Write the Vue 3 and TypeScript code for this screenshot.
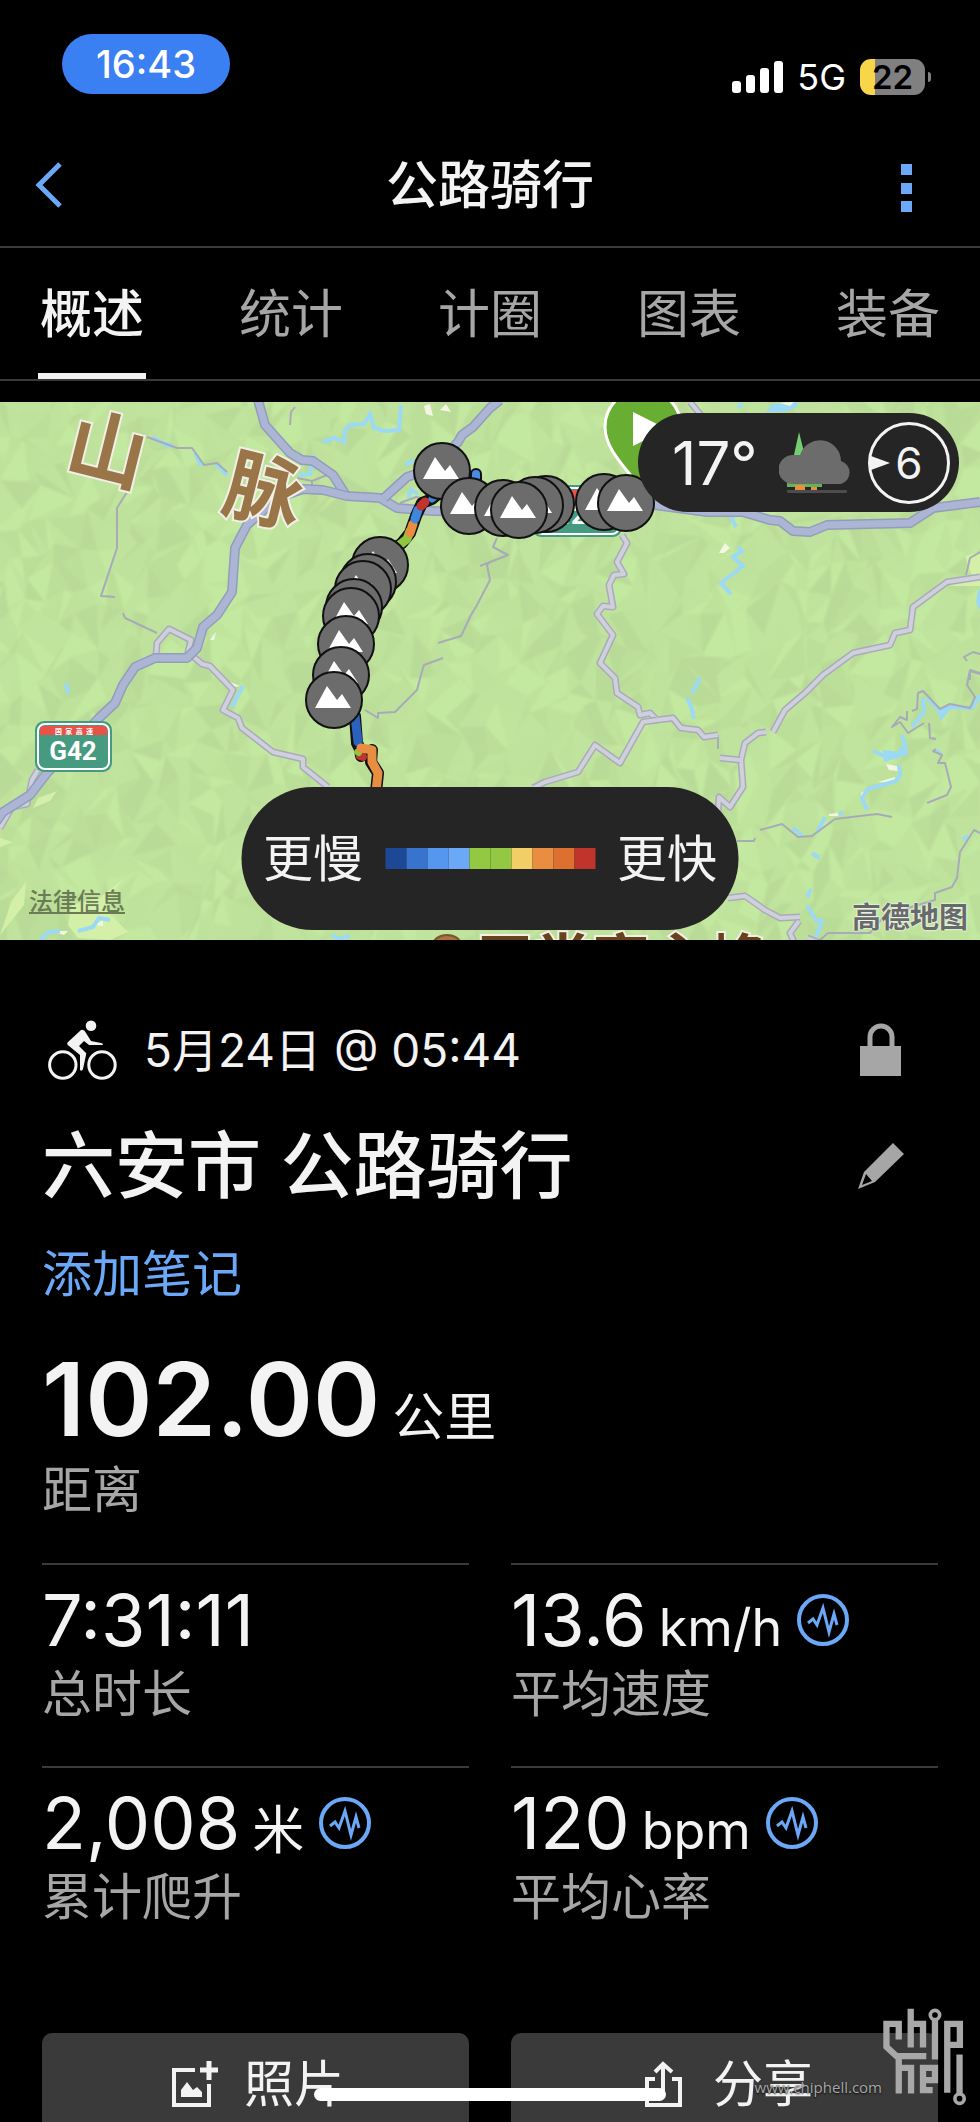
<script setup lang="ts">
interface Stat {
  value: string
  unit?: string
  label: string
  chart: boolean
}

interface Line {
  kind: 'main' | 'minor' | 'thin'
  points: string
}

const tabs: string[] = ['概述', '统计', '计圈', '图表', '装备']
const activeTab = '概述'

const stats: Stat[] = [
  { value: '7:31:11', label: '总时长', chart: false },
  { value: '13.6', unit: 'km/h', label: '平均速度', chart: true },
  { value: '2,008', unit: '米', label: '累计爬升', chart: true },
  { value: '120', unit: 'bpm', label: '平均心率', chart: true },
]

const speedColors: string[] = [
  '#1c4896', '#3874ce', '#5596ee', '#6ba8f7', '#93c843',
  '#93c843', '#f2ce66', '#e98e41', '#dc702f', '#c1342c',
]

const roads: Line[] = [
  { kind: 'thin', points: '147,437 177,448 192,448 204,465 217,463 227,472' },
  { kind: 'thin', points: '144,435 132,438 127,465 127,492 117,508 117,548 101,596 115,597' },
  { kind: 'thin', points: '123,613 125,618 157,633' },
  { kind: 'thin', points: '490,562 487,565 490,580 477,605 471,615 461,636 438,643' },
  { kind: 'thin', points: '443,658 424,665 421,675 417,690 395,712 378,713 378,718 365,710' },
  { kind: 'thin', points: '295,407 291,412 290,425' },
  { kind: 'thin', points: '497,538 493,547 508,555 480,566' },
  { kind: 'thin', points: '297,478 312,481 327,475 M312,481 312,490' },
  { kind: 'thin', points: '400,503 416,497 422,498' },
  { kind: 'thin', points: '718,735 718,749' },
  { kind: 'thin', points: '737,841 754,841 755,838' },
  { kind: 'thin', points: '760,830 782,824 798,837 812,836 835,819 877,814 892,817' },
  { kind: 'thin', points: '907,711 907,720 900,717 892,727 900,722 908,733 924,723' },
  { kind: 'thin', points: '912,711 917,709 918,693 923,691 940,709 950,704 970,708 975,697 967,685 970,670 980,673' },
  { kind: 'thin', points: '929,723 930,738 936,739' },
  { kind: 'thin', points: '936,749 933,751 942,755 938,763 945,763 951,787 947,795 927,803' },
  { kind: 'thin', points: '980,833 974,830 960,852 957,878 952,887 935,893 935,900 918,905 885,915 870,933 828,933 820,940' },
  { kind: 'thin', points: '980,552 970,558 966,575' },
  { kind: 'thin', points: '980,654 973,652 964,657 967,661' },
  { kind: 'thin', points: '970,680 970,671 980,674' },
  { kind: 'minor', points: '690,402 700,414 708,425' },
  { kind: 'minor', points: '156,656 157,643 169,629 191,640 188,652 202,664 210,666 233,690 223,710 238,718 242,728 273,752 303,759 303,767 328,787' },
  { kind: 'minor', points: '622,535 627,543 617,562 624,574 614,575 609,585 613,607 603,606 597,614 613,635 600,663 615,678 617,693 638,707 640,715 650,713 657,720 673,718 681,728 698,730 704,737 718,735' },
  { kind: 'minor', points: '657,720 643,722 620,763 595,745 578,772 545,782 533,788' },
  { kind: 'minor', points: '980,577 947,582 913,607 910,630 895,633 890,645 853,653 823,675 805,693 785,710 773,732' },
  { kind: 'minor', points: '766,732 758,733 745,743 741,760 743,787 730,807 719,797 718,813' },
  { kind: 'minor', points: '720,758 740,760' },
  { kind: 'minor', points: '728,898 745,896 765,910 780,918 800,917' },
  { kind: 'minor', points: '799,921 790,933 794,942 M807,938 820,943' },
  { kind: 'minor', points: '0,828 12,807 27,804 32,780 38,770' },
  { kind: 'main', points: '258,400 265,425 290,453 302,460 313,461 333,475 347,497' },
  { kind: 'main', points: '-4,822 3,812 30,795 47,773 100,717 115,703 123,685 135,667 155,658 187,658 197,648 203,627 217,615 232,592 235,548 247,525 277,498 303,489 323,490 347,496 380,498 397,508 433,511 500,512 655,505 707,512 743,512 770,520 780,521 793,531 810,532 827,525 910,523 933,508 980,502' },
  { kind: 'main', points: '384,498 407,477 433,468 458,442 462,435 473,427 490,408 500,400' },
]

const streams: string[] = [
  'M323 442 L334 438 L344 442 L345 430 L350 425 L364 424 L370 414 L374 428 L384 431 L399 430 L401 405',
  'M152 437 L165 444 L173 446 M195 453 L201 466 M216 464 L227 475',
  'M299 475 L310 474 L314 455 M405 465 L414 460 M408 498 L411 490 L418 494',
  'M731 517 L736 527 M738 547 L742 551 L733 557 L743 566 L721 583 L731 594',
  'M700 678 L692 693 M687 698 L691 706 L694 719',
  'M243 686 L232 707 M66 683 L68 694',
  'M923 698 L924 712 L912 727 M927 698 L940 710 L952 707 L972 708 L980 695',
  'M902 735 L905 745 L899 753 L887 757 L873 751',
  'M899 765 L900 775 L896 781 L868 789 L862 798 L867 810',
  'M825 817 L817 832 M793 828 L802 835 M812 853 L819 858 M840 815 L842 811',
  'M811 889 L807 897 M807 906 L816 920 L822 921 L816 937',
  'M40 940 L49 932 L60 931 M78 931 L93 927 L99 918 L110 920',
  'M332 935 L338 939 L350 936 M963 840 L968 836 M738 408 L742 403 M936 750 L941 754',
]

const markers: [number, number][] = [
  [380, 565], [368, 582], [363, 589], [354, 607], [351, 616], [346, 644], [341, 675], [334, 700],
  [442, 471], [469, 506], [503, 508], [546, 504], [535, 505], [519, 510], [604, 502], [626, 503],
]

const shades: string[] = ['#b9db97', '#bde19a', '#c0e49c', '#c4e9a0', '#b6d795', '#bfe29c']

/* Faceted relief: a jittered grid cut into triangles, grouped by shade. */
function buildRelief(): string[] {
  const cols = 62
  const rows = 26
  let seed = 7
  const rand = (): number => {
    seed = (seed * 16807) % 2147483647
    return seed / 2147483647
  }
  const pts: [number, number][][] = []
  for (let r = 0; r <= rows; r++) {
    const row: [number, number][] = []
    for (let c = 0; c <= cols; c++) {
      row.push([
        Math.round(c * 17 - 30 + (rand() - 0.5) * 22 + (r % 2) * 9),
        Math.round(r * 24 + 380 + (rand() - 0.5) * 32),
      ])
    }
    pts.push(row)
  }
  const out: string[] = shades.map(() => '')
  const tri = (a: [number, number], b: [number, number], c: [number, number]): void => {
    const i = Math.floor(rand() * shades.length)
    out[i] += `M${a}L${b}L${c}Z`
  }
  for (let r = 0; r < rows; r++) {
    for (let c = 0; c < cols; c++) {
      const [a, b, d, e] = [pts[r][c], pts[r][c + 1], pts[r + 1][c], pts[r + 1][c + 1]]
      if (rand() > 0.25) {
        tri(a, b, d)
        tri(b, d, e)
      } else {
        tri(a, b, e)
        tri(a, d, e)
      }
    }
  }
  return out
}

const relief = buildRelief()
</script>

<template>
  <div class="screen">
    <div class="status">
      <span class="clock">16:43</span>
      <div class="status-right">
        <svg class="signal" viewBox="0 0 51 32" aria-hidden="true">
          <rect x="0" y="20" width="9" height="12" rx="3" />
          <rect x="14" y="14" width="9" height="18" rx="3" />
          <rect x="28" y="7" width="9" height="25" rx="3" />
          <rect x="42" y="0" width="9" height="32" rx="3" />
        </svg>
        <span class="network">5G</span>
        <span class="battery"><span class="battery-body">22</span><span class="battery-nub"></span></span>
      </div>
    </div>

    <header class="header">
      <button class="icon-btn" type="button" aria-label="返回">
        <svg width="28" height="48" viewBox="0 0 28 48"><path d="M26 3 L5 24 L26 45" fill="none" stroke="#6ba8f7" stroke-width="5" /></svg>
      </button>
      <h1>公路骑行</h1>
      <button class="icon-btn more" type="button" aria-label="更多">
        <svg width="12" height="48" viewBox="0 0 12 48" fill="#6ba8f7"><path d="M0 0h11v11H0zM0 19h11v11H0zM0 37h11v11H0z" /></svg>
      </button>
    </header>

    <nav class="tabs" role="tablist">
      <button
        v-for="tab in tabs"
        :key="tab"
        class="tab"
        :class="{ active: tab === activeTab }"
        type="button"
        role="tab"
        :aria-selected="tab === activeTab"
      >{{ tab }}</button>
    </nav>

    <section class="map">
      <svg class="map-art" viewBox="0 402 980 538" preserveAspectRatio="xMidYMid slice">
        <defs>
          <g id="climb">
            <circle r="28" fill="#6c6c6c" stroke="#111" stroke-width="2" />
            <path d="M-19 8 L-7 -14 L3 0 L8 -6 L17 8Z" fill="#fff" />
          </g>
          <filter id="soft"><feGaussianBlur stdDeviation="1" /></filter>
        </defs>
        <rect x="0" y="402" width="980" height="538" fill="#c0e49d" />
        <g filter="url(#soft)">
          <path v-for="(d, i) in relief" :key="i" :d="d" :fill="shades[i]" opacity="0.7" />
        </g>
        <g fill="#d3efa8">
          <path d="M38 798 L57 791 L50 801 L33 808Z M0 838 L13 842 L0 847Z M72 905 L100 897 L122 880 L104 908 L128 932 L110 940 L78 938 L68 925Z M0 935 L12 900 L26 882 L24 905 L8 925Z" />
          <path d="M965 556 L980 552 L980 586 L950 586 L958 578 L972 576Z" />
        </g>
        <g fill="#f4f6e4">
          <path d="M719 553 L725 543 L730 548 L724 553Z M424 406 L430 404 L433 416 L426 414Z M440 410 L446 404 L451 412Z M230 682 L240 686 L228 688Z M210 640 L216 632 L214 640Z" />
          <path d="M886 764 L897 766 L898 771 L889 770Z M878 782 L895 777 L894 783Z M861 793 L865 791 L864 798 L861 800Z M829 814 L838 813 L838 816 L829 816Z M52 931 L68 931 L64 935Z M95 925 L103 920 L103 926Z" />
        </g>
        <g class="streams"><path v-for="d in streams" :key="d" :d="d" /></g>
        <path fill="#9bd9f5" d="M766 412 L772 404 L798 402 L796 408 L784 412Z M936 708 L953 706 L941 721Z M883 750 L903 752 L906 742 L908 755 L884 762Z M812 853 L820 855 L819 860Z M978 590 L980 588 L980 610 L976 603Z M160 442 L172 443 L174 448 L165 447Z" />
        <path fill="#f4f6e4" d="M780 403 L794 402 L790 406Z" />
        <g v-for="(road, i) in roads" :key="'r' + i" :class="road.kind">
          <path class="casing" :d="'M' + road.points" />
          <path class="surface" :d="'M' + road.points" />
        </g>

        <g class="range-name">
          <text transform="translate(107 450) rotate(14)" y="28">山</text>
          <text transform="translate(264 491) rotate(14)" y="28">脉</text>
        </g>
        <ellipse cx="447" cy="945" rx="14" ry="10" fill="#a87447" stroke="#7d5330" stroke-width="2" />
        <text class="peak-name" x="476" y="982">天堂寨主峰</text>

        <g class="shield">
          <rect x="35" y="721" width="77" height="51" rx="9" fill="#459a80" />
          <rect x="38" y="724" width="71" height="45" rx="7" fill="#459a80" stroke="#fff" stroke-width="2" />
          <path d="M40 735 V729 Q40 726 44 726 H103 Q107 726 107 729 V735Z" fill="#ea5248" />
          <text x="74" y="734" class="shield-top">国&#160; 家&#160; 高&#160; 速</text>
          <text x="73" y="760" class="shield-no">G42</text>
        </g>
        <g class="shield">
          <rect x="532" y="485" width="90" height="52" rx="9" fill="#459a80" />
          <rect x="535" y="488" width="84" height="46" rx="7" fill="#459a80" stroke="#fff" stroke-width="2" />
          <path d="M537 499 V493 Q537 490 541 490 H613 Q617 490 617 493 V499Z" fill="#ea5248" />
          <text x="577" y="524" class="shield-no">G4221</text>
        </g>

        <g fill="none" stroke-linejoin="round" stroke-linecap="round">
          <path d="M438 494 L432 499 L422 503 L416 516 L410 533 L402 543 L394 549 M476 474 V480" stroke="#111" stroke-width="12" />
          <path d="M410 531 L407 539 L402 543 L394 549" stroke="#8ec63f" stroke-width="9" />
          <path d="M413 524 L410 533" stroke="#e98e41" stroke-width="9" />
          <path d="M418 510 L415 519" stroke="#3f86dc" stroke-width="9" />
          <path d="M425 502 L421 506" stroke="#c1342c" stroke-width="9" />
          <path d="M436 496 L432 499" stroke="#3f86dc" stroke-width="7" />
          <path d="M476 474 V480" stroke="#4a8ae6" stroke-width="8" />
          <path d="M355 716 L357 743 L360 749 L361 756 L372 750 L371 762 L378 773 L376 792" stroke="#111" stroke-width="12" />
          <path d="M355 716 L358 742" stroke="#2c62bd" stroke-width="9" />
          <path d="M360 756 L363 757" stroke="#c1342c" stroke-width="8" />
          <path d="M357 752 L359 753" stroke="#8ec63f" stroke-width="6" />
          <path d="M361 748 L372 750 L372 762 L378 773 L376 792" stroke="#e98e41" stroke-width="9" />
        </g>

        <path d="M605 427 A38 38 0 1 1 681 427 C681 452 655 472 643 492 C631 472 605 452 605 427Z" fill="#67ae32" stroke="#fff" stroke-width="3" />
        <path d="M633 412 L667 429 L633 446Z" fill="#fff" />
        <use v-for="(m, i) in markers" :key="'m' + i" href="#climb" :x="m[0]" :y="m[1]" />
      </svg>

      <div class="weather">
        <span class="temp">17°</span>
        <svg width="74" height="62" viewBox="0 0 74 62" aria-hidden="true">
          <path d="M20 0 L28 32 H13Z" fill="#72ce6e" />
          <path d="M8 48 H43 V55 H8Z" fill="#5fb558" />
          <path d="M16 53 H26 V58 H16Z M32 55 H38 V58 H32Z" fill="#e98e41" />
          <rect x="8" y="58" width="60" height="3" rx="1" fill="#4c4c4c" />
          <path d="M14 52 A14 14 0 0 1 14 23 H21 A21 21 0 0 1 62 29 A12 12 0 0 1 62 52Z" fill="#6c6c6c" />
        </svg>
        <span class="wind">6
          <svg class="wind-arrow" width="19" height="14" viewBox="0 0 19 14" aria-hidden="true"><path d="M0 0 L19 7 L0 14Z" fill="#f3f3f3" /></svg>
        </span>
      </div>

      <div class="legend">
        <span>更慢</span>
        <div class="scale"><i v-for="(c, i) in speedColors" :key="i" :style="{ background: c }"></i></div>
        <span>更快</span>
      </div>

      <a class="legal" href="#">法律信息</a>
      <span class="provider">高德地图</span>
    </section>

    <main class="details">
      <div class="row date-row">
        <svg class="bike" width="69" height="60" viewBox="48 30 69 60" aria-hidden="true">
          <g fill="none" stroke="#f3f3f3" stroke-width="3"><circle cx="62.8" cy="75" r="13.2" /><circle cx="102" cy="75" r="13.2" /></g>
          <ellipse cx="91" cy="35.8" rx="5.3" ry="5.3" fill="#f3f3f3" />
          <path d="M81 40 L68 52 Q66 54 69 56 L80 65 L80 80 Q82 82 83 79 L86 65 Q87 63 85 62 L79 56 L84 51 L89 55 H103 Q103 53 101 53 L91 51 L86 43 Q84 39 81 40Z" fill="#f3f3f3" />
        </svg>
        <time>5月24日 @ 05:44</time>
        <button class="side-btn" type="button" aria-label="隐私">
          <svg width="42" height="54" viewBox="0 0 42 54"><path d="M10 25 V14 A11 11 0 0 1 32 14 V25" fill="none" stroke="#a6a6a6" stroke-width="5" /><rect x="0" y="23" width="41" height="30" fill="#a6a6a6" /></svg>
        </button>
      </div>

      <div class="row title-row">
        <h2>六安市 公路骑行</h2>
        <button class="side-btn" type="button" aria-label="编辑">
          <svg width="46" height="46" viewBox="0 0 46 46"><path d="M35 0 L46 11 L17 39 L0 46 L6 29Z M8 31 L4 42 L14 38Z" fill="#a6a6a6" fill-rule="evenodd" /></svg>
        </button>
      </div>

      <button class="note" type="button">添加笔记</button>

      <div class="distance"><strong>102.00</strong><span>公里</span></div>
      <div class="label">距离</div>

      <div class="stats">
        <div v-for="stat in stats" :key="stat.label" class="stat">
          <div class="value">
            <span class="number">{{ stat.value }}</span>
            <span v-if="stat.unit" class="unit">{{ stat.unit }}</span>
            <button v-if="stat.chart" class="chart-btn" type="button" :aria-label="stat.label + '图表'">
              <svg width="52" height="52" viewBox="0 0 52 52" fill="none" stroke="#6ba8f7">
                <circle cx="26" cy="26" r="24" stroke-width="4" />
                <path d="M11 29 L16 25 L20 31 L26 14 L32 38 L37 20 L40 31" stroke-width="3" />
              </svg>
            </button>
          </div>
          <div class="label">{{ stat.label }}</div>
        </div>
      </div>

      <div class="actions">
        <button type="button">
          <svg width="46" height="46" viewBox="0 0 46 46" aria-hidden="true">
            <path d="M23 9 H2 V44 H37 V23" fill="none" stroke="#f3f3f3" stroke-width="4" />
            <path d="M37 0 V19 M28 9 H46" stroke="#f3f3f3" stroke-width="5" />
            <path d="M9 36 V29 L15 21 L21 29 L25 26 L30 31 V36Z" fill="#f3f3f3" />
          </svg>
          照片
        </button>
        <button type="button">
          <svg width="46" height="46" viewBox="-4 0 46 46" fill="none" stroke="#f3f3f3" stroke-width="4" aria-hidden="true">
            <path d="M10 18 H2 V44 H35 V18 H27 M18 33 V4 M10 11 L18 3 L27 11" />
          </svg>
          分享
        </button>
      </div>
    </main>

    <div class="home-bar"></div>
    <div class="credit">
      <span>www.chiphell.com</span>
      <svg width="85" height="98" viewBox="1175 85 255 295" role="img" aria-label="chiphell">
        <g fill="none" stroke="currentColor" stroke-width="19">
          <path d="M1225 180 V133 H1188 V202 L1218 230 H1308 M1225 225 V342" />
          <path d="M1261 87 V204 M1261 133 H1298 V204" />
          <path d="M1334 120 V240" />
          <path d="M1371 340 V133 H1409 V196 H1371" />
          <path d="M1225 265 H1262 V342" />
          <path d="M1290 302 H1334 V265 H1298 V332 H1327" />
          <path d="M1408 225 V345" />
          <circle cx="1334" cy="106" r="14" stroke-width="11" />
          <circle cx="1408" cy="358" r="14" stroke-width="11" />
        </g>
      </svg>
    </div>
  </div>
</template>

<style>
body {
  background: #000;
}
</style>

<style scoped>
.screen {
  position: relative;
  height: 100vh;
  overflow: hidden;
  background: #000;
  color: #f3f3f3;
  font-family: Inter, "Noto Sans CJK SC", sans-serif;
  font-size: 50px;
  line-height: 60px;
}
button {
  margin: 0;
  padding: 0;
  border: 0;
  background: none;
  color: inherit;
  font: inherit;
}
svg {
  display: block;
  flex: none;
}
h1,
h2 {
  margin: 0;
}
.status {
  display: flex;
  justify-content: space-between;
  height: 123px;
  padding: 34px 49px 0 62px;
  box-sizing: border-box;
}
.clock {
  width: 168px;
  height: 60px;
  border-radius: 30px;
  background: #3b80f2;
  color: #fff;
  font-size: 38px;
  font-weight: 500;
  text-align: center;
}
.status-right {
  display: flex;
  align-items: center;
  height: 86px;
  color: #fff;
}
.signal {
  width: 51px;
  height: 32px;
  fill: #fff;
}
.network {
  margin: 0 14px;
  font-size: 36px;
}
.battery {
  display: flex;
  align-items: center;
  gap: 3px;
}
.battery-body {
  width: 65px;
  height: 36px;
  border-radius: 11px;
  background: linear-gradient(90deg, #f8d649 15px, #808080 15px);
  color: #000;
  font-size: 33px;
  font-weight: 600;
  line-height: 36px;
  text-align: center;
}
.battery-nub {
  width: 3px;
  height: 10px;
  border-radius: 0 5px 5px 0;
  background: #808080;
}
.header {
  display: flex;
  align-items: center;
  justify-content: space-between;
  height: 125px;
  padding: 0 34px;
  box-sizing: border-box;
  border-bottom: 2px solid #3a3a3a;
}
.icon-btn {
  width: 68px;
}
.more {
  display: flex;
  justify-content: flex-end;
  padding-top: 6px;
  padding-right: 33px;
  box-sizing: border-box;
}
h1 {
  padding-top: 3px;
  font-size: 52px;
  font-weight: 500;
}
.tabs {
  display: flex;
  justify-content: space-between;
  height: 133px;
  padding: 0 38px;
  box-sizing: border-box;
  border-bottom: 2px solid #3a3a3a;
}
.tab {
  padding: 8px 2px 0;
  border-bottom: 6px solid transparent;
  color: #a6a6a6;
  font-size: 52px;
}
.tab.active {
  border-color: #f3f3f3;
  color: #f3f3f3;
  font-weight: 500;
}
.map {
  position: relative;
  height: 538px;
  margin-top: 21px;
  overflow: hidden;
}
.map-art {
  width: 100%;
  height: 100%;
}
.streams path {
  fill: none;
  stroke: #9bd9f5;
  stroke-width: 4px;
}
.casing,
.surface {
  fill: none;
  stroke-linejoin: round;
}
.main .casing {
  stroke: #929cbd;
  stroke-width: 10px;
}
.main .surface {
  stroke: #adb5d4;
  stroke-width: 7px;
}
.minor .casing {
  stroke: #a9abbc;
  stroke-width: 7px;
}
.minor .surface {
  stroke: #cfd0dc;
  stroke-width: 4px;
}
.thin .casing {
  stroke: #a7abb8;
  stroke-width: 2px;
}
.thin .surface {
  stroke: none;
}
.range-name text,
.peak-name {
  paint-order: stroke;
  stroke: #f1efe6;
  stroke-width: 4px;
  font-weight: 700;
}
.range-name text {
  fill: #997548;
  font-size: 78px;
  text-anchor: middle;
}
.peak-name {
  fill: #68421c;
  font-size: 58px;
}
.shield text {
  fill: #fff;
  font-weight: 700;
  text-anchor: middle;
}
.shield-no {
  font-family: Roboto, sans-serif;
  font-size: 26px;
}
.shield-top {
  font-size: 7px;
}
.weather {
  position: absolute;
  top: 11px;
  right: 21px;
  display: flex;
  align-items: center;
  justify-content: space-between;
  width: 321px;
  height: 99px;
  padding: 0 9px 0 34px;
  box-sizing: border-box;
  border-radius: 50px;
  background: #252525;
}
.temp {
  padding-right: 6px;
  font-size: 60px;
}
.wind {
  position: relative;
  width: 82px;
  height: 82px;
  box-sizing: border-box;
  border: 3px solid #f3f3f3;
  border-radius: 50%;
  font-size: 44px;
  line-height: 76px;
  text-align: center;
}
.wind-arrow {
  position: absolute;
  top: 31px;
  left: 0;
}
.legend {
  position: absolute;
  bottom: 10px;
  left: 50%;
  display: flex;
  align-items: center;
  justify-content: center;
  gap: 22px;
  width: 497px;
  height: 143px;
  border-radius: 72px;
  background: #252525;
  transform: translateX(-50%);
}
.scale {
  display: flex;
}
.scale i {
  width: 21px;
  height: 21px;
}
.legal {
  position: absolute;
  bottom: 21px;
  left: 29px;
  color: #6a7b55;
  font-size: 24px;
  font-weight: 500;
  line-height: 34px;
}
.provider {
  position: absolute;
  right: 12px;
  bottom: 5px;
  color: #68696b;
  font-size: 29px;
  font-weight: 700;
  line-height: 34px;
  text-shadow: 0 0 2px #fff, 0 0 2px #fff;
}
.details {
  padding: 72px 42px 0;
}
.row {
  display: flex;
  align-items: center;
}
.date-row {
  height: 76px;
  padding-left: 6px;
}
.bike {
  margin-right: 27px;
}
time {
  font-size: 46px;
}
.side-btn {
  display: flex;
  justify-content: center;
  width: 52px;
  margin: 0 31px 0 auto;
}
.title-row {
  height: 88px;
  margin-top: 34px;
}
h2 {
  font-size: 73px;
  font-weight: 500;
  line-height: 88px;
}
.note {
  display: block;
  margin-top: 34px;
  color: #6ba8f7;
}
.distance {
  display: flex;
  align-items: baseline;
  gap: 12px;
  height: 120px;
  margin-top: 35px;
  line-height: 120px;
}
.distance strong {
  font-size: 102px;
  font-weight: 600;
}
.distance span {
  font-size: 52px;
}
.label {
  padding-top: 1px;
  color: #a6a6a6;
}
.stats {
  display: grid;
  grid-template-columns: 1fr 1fr;
  column-gap: 42px;
  margin-top: 43px;
}
.stat {
  padding: 15px 0 42px;
  border-top: 2px solid #3a3a3a;
}
.value {
  display: flex;
  align-items: baseline;
  height: 80px;
  margin-bottom: 3px;
  line-height: 80px;
}
.number {
  font-size: 72px;
}
.unit {
  margin-left: 12px;
  font-size: 52px;
}
.chart-btn {
  align-self: center;
  margin-left: 15px;
}
.actions {
  display: grid;
  grid-template-columns: 1fr 1fr;
  column-gap: 42px;
  margin-top: 64px;
}
.actions button {
  display: flex;
  align-items: center;
  justify-content: center;
  gap: 26px;
  height: 100px;
  padding: 2px 0 0 5px;
  border-radius: 10px;
  background: #3a3a3a;
}
.home-bar {
  position: absolute;
  bottom: 21px;
  left: 32%;
  width: 36%;
  height: 13px;
  border-radius: 7px;
  background: #fff;
}
.credit {
  position: absolute;
  right: 13px;
  bottom: 16px;
  display: flex;
  align-items: flex-end;
  color: #a8a8a8;
  font-family: "Open Sans", sans-serif;
  font-size: 15px;
  line-height: 20px;
  text-shadow: 0 1px 2px #000;
}
.credit span {
  padding-bottom: 9px;
}
</style>
